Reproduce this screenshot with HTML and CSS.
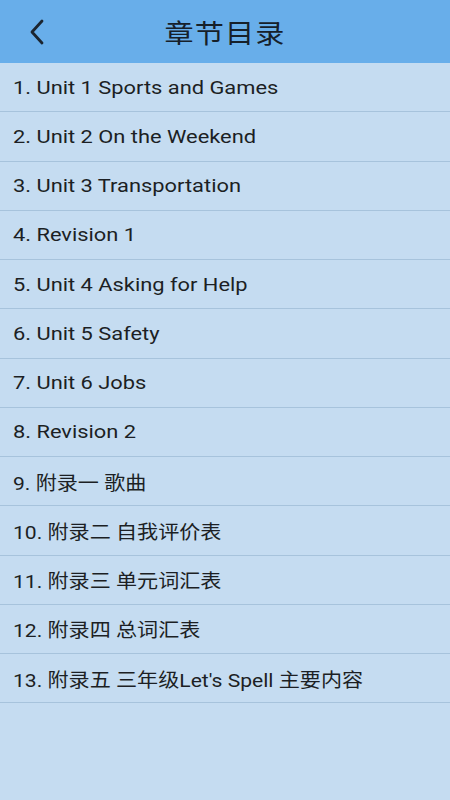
FILE: index.html
```html
<!DOCTYPE html>
<html lang="zh">
<head>
<meta charset="utf-8">
<link rel="stylesheet" href="styles.css">
</head>
<body>
<div class="app">
  <header class="bar">
    <svg class="back" viewBox="0 0 20 30" width="20" height="30">
      <path d="M15 4 L5 15 L15 26" fill="none" stroke="#1b2530" stroke-width="2.8" stroke-linecap="round" stroke-linejoin="round"/>
    </svg>
    <h1 class="title">章节目录</h1>
  </header>
  <ul class="list">
    <li class="row"><span class="label">1. Unit 1 Sports and Games</span></li>
    <li class="row"><span class="label">2. Unit 2 On the Weekend</span></li>
    <li class="row"><span class="label">3. Unit 3 Transportation</span></li>
    <li class="row"><span class="label">4. Revision 1</span></li>
    <li class="row"><span class="label">5. Unit 4 Asking for Help</span></li>
    <li class="row"><span class="label">6. Unit 5 Safety</span></li>
    <li class="row"><span class="label">7. Unit 6 Jobs</span></li>
    <li class="row"><span class="label">8. Revision 2</span></li>
    <li class="row"><span class="label cjk">9. 附录一 歌曲</span></li>
    <li class="row"><span class="label cjk">10. 附录二 自我评价表</span></li>
    <li class="row"><span class="label cjk">11. 附录三 单元词汇表</span></li>
    <li class="row"><span class="label cjk">12. 附录四 总词汇表</span></li>
    <li class="row"><span class="label cjk">13. 附录五 三年级Let's Spell 主要内容</span></li>
  </ul>
</div>
</body>
</html>
```
FILE: styles.css
```css
html, body {
  margin: 0;
  padding: 0;
  background: #c5dcf1;
}
body {
  font-family: Roboto, "Noto Sans CJK SC", sans-serif;
  color: #1c1f24;
}
.app {
  width: 450px;
  min-height: 800px;
  background: #c5dcf1;
}
.bar {
  position: relative;
  height: 63px;
  background: #68aeea;
  display: flex;
  align-items: center;
  justify-content: center;
}
.back {
  position: absolute;
  left: 27px;
  top: 17px;
}
.title {
  margin: 0;
  font-size: 26px;
  font-weight: 400;
  color: #16202a;
  letter-spacing: 1px;
  transform: scaleX(1.12);
}
.list {
  list-style: none;
  margin: 0;
  padding: 0;
}
.row {
  height: 48.25px;
  border-bottom: 1px solid #a7c3dc;
  display: flex;
  align-items: center;
  padding-left: 13px;
  font-size: 19px;
  color: #1c1f24;
}
.label {
  display: inline-block;
  white-space: nowrap;
  transform: scaleX(1.15);
  transform-origin: left center;
}
.label.cjk {
  transform: scaleX(1.11);
}
```
